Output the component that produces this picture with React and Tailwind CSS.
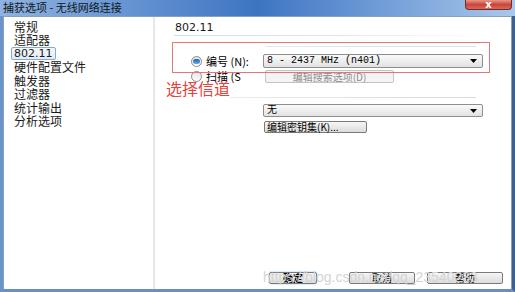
const cjk = { fontFamily: "'Noto Sans CJK SC', 'DejaVu Sans', sans-serif" };
const mono = { fontFamily: "'Liberation Mono', 'Noto Sans CJK SC', monospace" };

const navItems = ["常规", "适配器", "802.11", "硬件配置文件", "触发器", "过滤器", "统计输出", "分析选项"];

function Radio({ checked }) {
  return (
    <span className="w-[11px] h-[11px] rounded-full border border-[#8c8c8c] bg-gradient-to-b from-[#e4e4e4] to-[#ffffff] flex items-center justify-center shrink-0">
      {checked && (
        <span className="w-[7px] h-[5px] rounded-full bg-gradient-to-b from-[#1c5fa8] to-[#62b0ea]" />
      )}
    </span>
  );
}

function Select({ children, className = "" }) {
  return (
    <div
      className={
        "flex items-center justify-between border border-[#8e8e8e] rounded-[2px] bg-gradient-to-b from-[#fafafa] to-[#e2e2e2] pl-[3px] pr-[5px] " +
        className
      }
    >
      <span className="text-[10px] leading-none text-black" style={mono}>
        {children}
      </span>
      <svg width="7" height="4" viewBox="0 0 7 4">
        <path d="M0 0 L7 0 L3.5 4 Z" fill="#000" />
      </svg>
    </div>
  );
}

function Button({ children, className = "", disabled }) {
  return (
    <div
      className={
        "flex items-center justify-center border rounded-[2px] text-[10px] leading-none " +
        (disabled
          ? "border-[#c4c4c4] bg-[#f4f4f4] text-[#8c8c8c] "
          : "border-[#7a7a7a] bg-gradient-to-b from-[#f6f6f6] to-[#dcdcdc] text-black ") +
        className
      }
      style={cjk}
    >
      {children}
    </div>
  );
}

export default function App() {
  return (
    <div className="w-[515px] h-[292px] relative flex flex-col bg-[#5f8ccc] overflow-hidden" style={cjk}>
      {/* title bar */}
      <div className="h-[16px] shrink-0 flex items-start justify-between bg-gradient-to-r from-[#8fb3e0] via-[#3d74c2] to-[#a9c8ec]">
        <span className="pl-[3px] pt-[1px] text-[11px] leading-[13px] text-[#101820]">
          捕获选项 - 无线网络连接
        </span>
        <div className="mr-[3px] w-[47px] h-[10px] rounded-b-[4px] border border-t-0 border-[#7a2a22] bg-gradient-to-b from-[#e8968a] via-[#c7453a] to-[#d66a58] flex items-center justify-center">
          <span className="text-white text-[10px] leading-none font-bold" style={{ fontFamily: "'DejaVu Sans', sans-serif" }}>
            x
          </span>
        </div>
      </div>

      {/* body */}
      <div className="flex-1 flex border-l-[3px] border-r-[3px] border-b-[3px] border-l-[#6a94cc] border-r-[#3f5f8c] border-b-[#6a8fc4]">
        <div className="flex-1 flex bg-white border-t border-l border-r border-[#8aa0b8]">
          {/* sidebar */}
          <div className="w-[151px] shrink-0 flex flex-col pt-[3px] border-r-2 border-[#e4e9ee]">
            {navItems.map((item) => (
              <div key={item} className="h-[13.5px] flex items-center">
                <span
                  className={
                    "ml-[7px] px-[2px] h-[13px] flex items-center text-[12px] leading-none text-[#1a1a1a] rounded-[2px] border " +
                    (item === "802.11"
                      ? "border-[#84a9d4] bg-gradient-to-b from-[#f4f8fc] to-[#e2ecf7]"
                      : "border-transparent")
                  }
                  style={item === "802.11" ? { fontFamily: "'DejaVu Sans', sans-serif", fontSize: "11px" } : undefined}
                >
                  {item}
                </span>
              </div>
            ))}
          </div>

          {/* panel */}
          <div className="flex-1 flex flex-col">
            <div className="pt-[4px] pl-[20px] h-[18px] text-[11px] leading-[14px] text-[#1a1a1a]" style={{ fontFamily: "'DejaVu Sans', sans-serif" }}>
              802.11
            </div>
            <div className="ml-[19px] w-[315px] h-px bg-gradient-to-r from-[#d4dbe2] via-[#e0e6ec] to-[#ffffff]" />

            <div className="mt-[10px] ml-[111px] w-[210px] h-px bg-gradient-to-r from-[#e4e8ec] to-[#d8dde2]" />

            <div className="mt-[7px] h-[14px] flex items-center">
              <div className="ml-[36px] w-[72px] flex items-center gap-[4px]">
                <Radio checked />
                <span className="text-[11px] leading-none text-black">编号 (N):</span>
              </div>
              <Select className="w-[220px] h-[14px]">8 - 2437 MHz (n401)</Select>
            </div>

            <div className="mt-[2px] h-[13px] flex items-center">
              <div className="ml-[36px] w-[74px] flex items-center gap-[4px]">
                <Radio />
                <span className="text-[11px] leading-none text-black">扫描 (S</span>
              </div>
              <Button disabled className="w-[129px] h-[13px]">
                编辑搜索选项(D)
              </Button>
            </div>

            <div className="mt-[14px] ml-[75px] w-[246px] h-px bg-gradient-to-r from-[#e8ecef] to-[#d6dbe0]" />

            <div className="mt-[6px] ml-[108px]">
              <Select className="w-[220px] h-[13px]">无</Select>
            </div>

            <div className="mt-[4px] ml-[109px]">
              <Button className="w-[103px] h-[12px] justify-start pl-[2px]">编辑密钥集(K)...</Button>
            </div>

            <div className="flex-1" />

            <div className="mb-[5px] flex items-center">
              <Button className="ml-[114px] w-[48px] h-[12px] border-[#3c8fd0] shadow-[0_0_2px_#7fcaf5] bg-gradient-to-b from-[#e8f6fe] to-[#bfe3f8] font-bold">
                确定
              </Button>
              <Button className="ml-[32px] w-[66px] h-[12px]">取消</Button>
              <Button className="ml-[12px] w-[76px] h-[12px]">帮助</Button>
            </div>
          </div>
        </div>
      </div>

      {/* annotation overlays */}
      <div className="absolute left-[172px] top-[42px] w-[318px] h-[31px] border border-[#e07878] pointer-events-none" />
      <span className="absolute left-[166px] top-[80px] text-[16px] leading-[17px] text-[#e8403a]">选择信道</span>
      <span
        className="absolute left-[263px] top-[269px] text-[14px] leading-[16px] text-[#d4d4d4] pointer-events-none"
        style={{ fontFamily: "'Liberation Sans', sans-serif" }}
      >
        https://blog.csdn.net/qq_23540233
      </span>
    </div>
  );
}
